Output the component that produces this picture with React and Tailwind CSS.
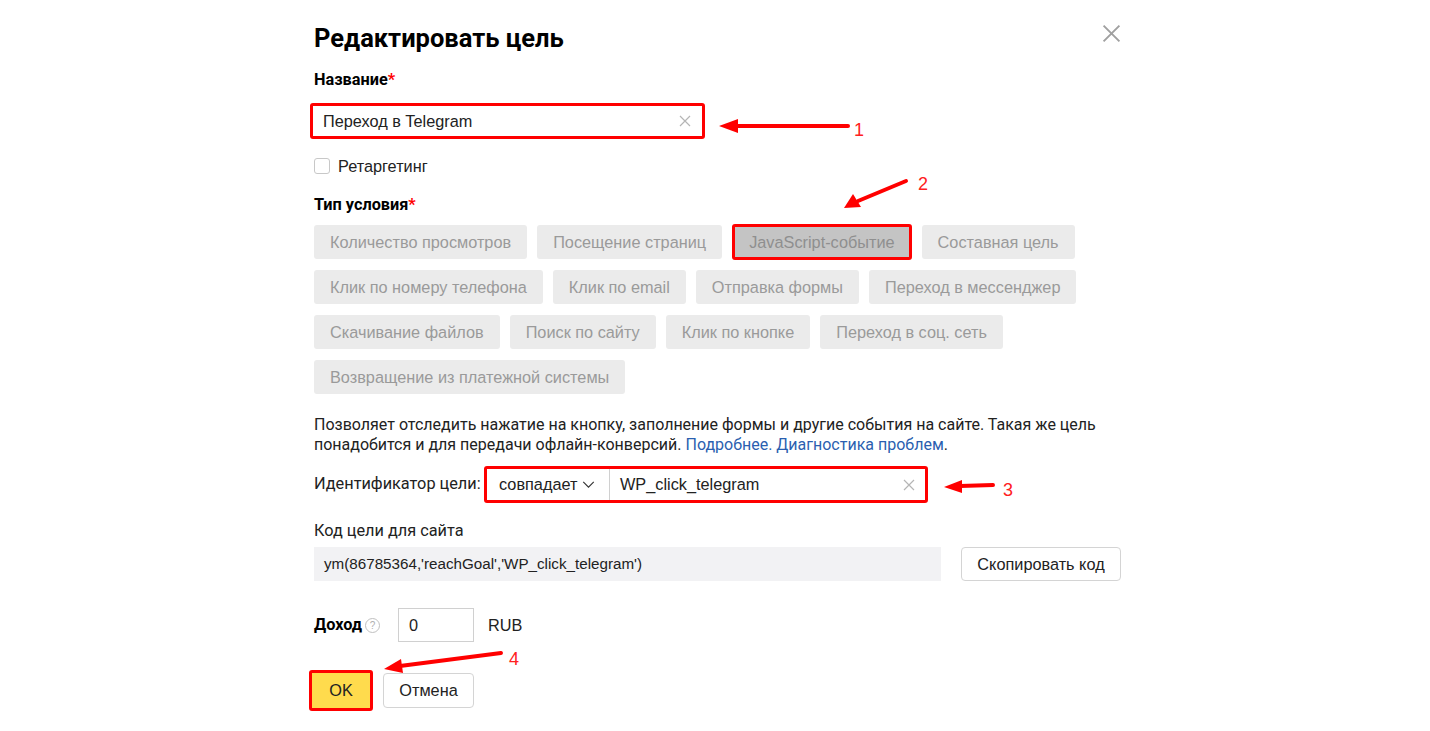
import React from 'react';

const ys = { fontFamily: 'Roboto, "Noto Sans", sans-serif' };
const arial = { fontFamily: '"Liberation Sans", Arial, sans-serif' };

const rows = [
  ['Количество просмотров', 'Посещение страниц', 'JavaScript-событие', 'Составная цель'],
  ['Клик по номеру телефона', 'Клик по email', 'Отправка формы', 'Переход в мессенджер'],
  ['Скачивание файлов', 'Поиск по сайту', 'Клик по кнопке', 'Переход в соц. сеть'],
  ['Возвращение из платежной системы'],
];

const Cross = ({ className }) => (
  <svg viewBox="0 0 12 12" className={className} fill="none" stroke="currentColor" strokeWidth="1.2">
    <path d="M1 1L11 11M11 1L1 11" />
  </svg>
);

const TypeButton = ({ label }) => {
  const active = label === 'JavaScript-событие';
  if (active) {
    return (
      <div className="h-[36px] -my-[1px] border-[3px] border-[#ff0000] rounded-[3px] bg-[#c4c4c4] px-[14px] flex items-center text-[16.3px] text-[#8f8f8f]" style={arial}>
        {label}
      </div>
    );
  }
  return (
    <div className="h-[34px] rounded-[3px] bg-[#ebebeb] px-[16px] flex items-center text-[16.3px] text-[#9a9a9a]" style={arial}>
      {label}
    </div>
  );
};

export default function App() {
  return (
    <div className="relative w-[1430px] h-[731px] bg-white overflow-hidden text-black">
      <div className="ml-[314px] w-[808px] pt-[23px] flex flex-col">
        <div className="flex justify-between items-start">
          <h1 className="text-[25.5px] leading-[30px] font-bold" style={ys}>Редактировать цель</h1>
          <Cross className="w-[19px] h-[19px] text-[#a0a0a0] mt-[1px] mr-[1px]" />
        </div>

        <div className="mt-[17px] text-[16.3px] leading-[20px] font-bold" style={ys}>
          Название<span className="text-[#ff0000]">*</span>
        </div>
        <div className="mt-[13px] -ml-[4px] w-[395px] h-[36px] border-[3px] border-[#ff0000] rounded-[3px] flex items-center pl-[10px] pr-[11px]">
          <span className="flex-1 text-[16.3px] text-[#222]" style={arial}>Переход в Telegram</span>
          <Cross className="w-[12px] h-[12px] text-[#b5b5b5]" />
        </div>

        <label className="mt-[17px] flex items-center h-[20px]">
          <span className="w-[16px] h-[16px] rounded-[3px] border border-[#c8c8c8] bg-white" />
          <span className="ml-[8px] text-[16.3px] text-[#222]" style={arial}>Ретаргетинг</span>
        </label>

        <div className="mt-[19px] text-[16.3px] leading-[20px] font-bold" style={ys}>
          Тип условия<span className="text-[#ff0000]">*</span>
        </div>
        <div className="mt-[10px] flex flex-col gap-y-[11px]">
          {rows.map((r, i) => (
            <div key={i} className="flex gap-x-[10px] items-center">
              {r.map((l) => <TypeButton key={l} label={l} />)}
            </div>
          ))}
        </div>

        <p className="mt-[21px] w-[790px] text-[16px] leading-[19.5px] text-[#222]" style={ys}>
          Позволяет отследить нажатие на кнопку, заполнение формы и другие события на сайте. Такая же цель понадобится и для передачи офлайн-конверсий. <span className="text-[#2b5fb0]">Подробнее.</span> <span className="text-[#2b5fb0]">Диагностика проблем</span>.
        </p>

        <div className="mt-[12px] flex items-center">
          <span className="text-[16.3px] text-[#222] w-[170px]" style={ys}>Идентификатор цели:</span>
          <div className="w-[444px] h-[37px] border-[3px] border-[#ff0000] rounded-[3px] flex items-stretch">
            <div className="w-[123px] flex items-center pl-[12px] border-r border-[#d0d0d0]">
              <span className="text-[16.3px] text-[#222]" style={arial}>совпадает</span>
              <svg viewBox="0 0 14 8" className="w-[13px] h-[7px] ml-[5px] text-[#333]" fill="none" stroke="currentColor" strokeWidth="1.3">
                <path d="M1 1l6 6 6-6" />
              </svg>
            </div>
            <div className="flex-1 flex items-center pl-[10px] pr-[10px]">
              <span className="flex-1 text-[16.3px] text-[#222]" style={arial}>WP_click_telegram</span>
              <Cross className="w-[12px] h-[12px] text-[#b5b5b5]" />
            </div>
          </div>
        </div>

        <div className="mt-[18px] text-[16.3px] leading-[20px] text-[#222]" style={ys}>Код цели для сайта</div>
        <div className="mt-[6px] flex items-center">
          <div className="w-[627px] h-[34px] bg-[#f2f2f4] flex items-center pl-[10px] text-[15.2px] text-[#222]" style={arial}>
            ym(86785364,'reachGoal','WP_click_telegram')
          </div>
          <button className="ml-[20px] w-[160px] h-[34px] rounded-[4px] border border-[#d4d4d4] bg-white text-[16.3px] text-[#222]" style={arial}>
            Скопировать код
          </button>
        </div>

        <div className="mt-[27px] flex items-center">
          <span className="text-[16.3px] font-bold" style={ys}>Доход</span>
          <span className="ml-[3px] w-[15px] h-[15px] rounded-full border border-[#c0c0c0] text-[#b0b0b0] text-[10px] leading-[13px] flex items-center justify-center" style={arial}>?</span>
          <div className="ml-[18px] w-[76px] h-[34px] border border-[#d0d0d0] flex items-center pl-[10px] text-[16.3px] text-[#222]" style={arial}>0</div>
          <span className="ml-[14px] text-[16.3px] text-[#222]" style={arial}>RUB</span>
        </div>

        <div className="mt-[28px] -ml-[5px] flex items-start">
          <button className="w-[64px] h-[41px] border-[3px] border-[#ff0000] rounded-[3px] bg-[#ffdb4d] text-[16.3px] text-[#222]" style={arial}>OK</button>
          <button className="ml-[10px] mt-[3px] w-[91px] h-[35px] rounded-[4px] border border-[#d4d4d4] bg-white text-[16.3px] text-[#222]" style={arial}>Отмена</button>
        </div>
      </div>

      <svg className="absolute inset-0 pointer-events-none" width="1430" height="731">
        <g fill="#ff0000" stroke="#ff0000" strokeLinecap="round">
          <line x1="848" y1="126" x2="734" y2="126" strokeWidth="4" />
          <polygon points="719,126 738,119 738,133" stroke="none" />
          <line x1="906" y1="181" x2="858" y2="201" strokeWidth="4" />
          <polygon points="844,208 853,194 861,207" stroke="none" />
          <line x1="993" y1="485" x2="960" y2="486" strokeWidth="4" />
          <polygon points="944,487 962,480 962,493" stroke="none" />
          <line x1="501" y1="653" x2="400" y2="666" strokeWidth="4" />
          <polygon points="384,669 401,659 403,673" stroke="none" />
        </g>
      </svg>
      <span className="absolute left-[854px] top-[117px] text-[18px] text-[#ff2020]" style={arial}>1</span>
      <span className="absolute left-[918px] top-[171px] text-[18px] text-[#ff2020]" style={arial}>2</span>
      <span className="absolute left-[1003px] top-[477px] text-[18px] text-[#ff2020]" style={arial}>3</span>
      <span className="absolute left-[509px] top-[646px] text-[18px] text-[#ff2020]" style={arial}>4</span>
    </div>
  );
}
